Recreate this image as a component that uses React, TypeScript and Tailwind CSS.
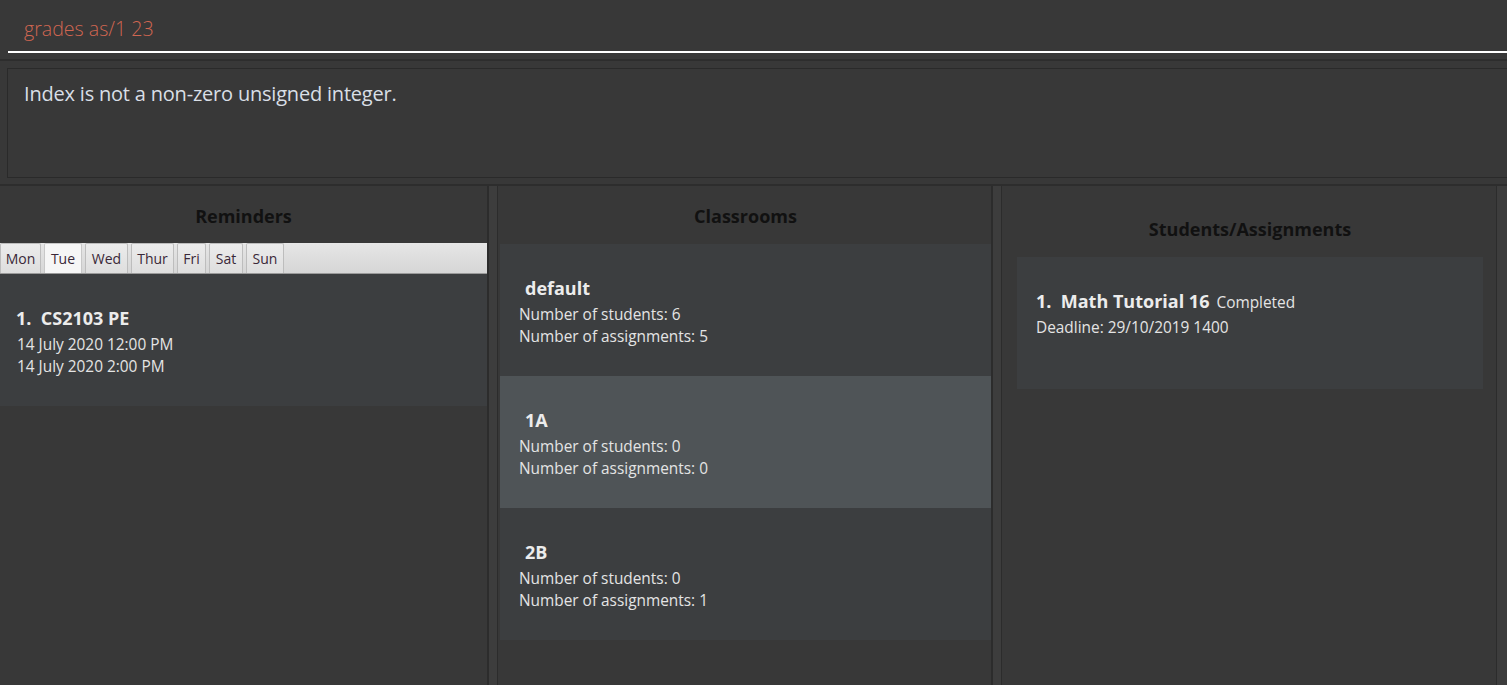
import React from "react";

const tabs = [
  { label: "Mon", w: "w-[41px]", sel: false },
  { label: "Tue", w: "w-[38px]", sel: true },
  { label: "Wed", w: "w-[43px]", sel: false },
  { label: "Thur", w: "w-[43px]", sel: false },
  { label: "Fri", w: "w-[29px]", sel: false },
  { label: "Sat", w: "w-[34px]", sel: false },
  { label: "Sun", w: "w-[38px]", sel: false },
];

const classrooms = [
  { name: "default", students: 6, assignments: 5, odd: false },
  { name: "1A", students: 0, assignments: 0, odd: true },
  { name: "2B", students: 0, assignments: 1, odd: false },
];

function Divider() {
  return (
    <div className="w-[12px] h-full flex">
      <div className="w-[1px] bg-[#2c2c2c]" />
      <div className="flex-1 bg-[#3d3d3d]" />
      <div className="w-[1px] bg-[#2c2c2c]" />
      <div className="w-[2px] bg-[#383838]" />
    </div>
  );
}

export default function App() {
  return (
    <div className="w-[1507px] h-[685px] overflow-hidden bg-[#383838] flex flex-col font-['Open_Sans',sans-serif]">
      {/* Command box */}
      <div className="h-[61px] shrink-0 border-b-2 border-[#2d2d2d] pl-[8px]">
        <div className="h-[53px] border-b-2 border-white flex items-center pl-[16px] pt-[6px]">
          <span className="text-[19.6px] font-light text-[#d06651]">grades as/1 23</span>
        </div>
      </div>
      {/* Result display */}
      <div className="h-[125px] shrink-0 border-b-2 border-[#2d2d2d] pl-[7px] pt-[7px]">
        <div className="h-[110px] border border-[#2a2a2a] border-r-0 pl-[16px] pt-[12px]">
          <span className="text-[20px] text-[#d9dfe6] tracking-[-0.2px] leading-[26px]">
            Index is not a non-zero unsigned integer.
          </span>
        </div>
      </div>
      {/* Panels */}
      <div className="flex-1 flex">
        {/* Reminders */}
        <div className="w-[488px] h-full flex flex-col border-r border-[#2c2c2c]">
          <div className="h-[57px] flex items-center justify-center pt-[3px]">
            <span className="text-[18px] font-bold text-[#111111]">Reminders</span>
          </div>
          <div className="h-[31px] bg-gradient-to-b from-[#e6e6e6] to-[#d6d6d6] border-b border-[#9a9a9a] flex items-end gap-[3px]">
            {tabs.map((t) => (
              <div
                key={t.label}
                className={`${t.w} h-[30px] flex items-center justify-center rounded-t-[2px] border border-b-0 text-[14px] text-[#3a2838] ${
                  t.sel
                    ? "bg-[#f6f6f6] border-[#c8c8c8]"
                    : "bg-gradient-to-b from-[#ececec] to-[#dedede] border-[#bdbdbd]"
                }`}
              >
                {t.label}
              </div>
            ))}
          </div>
          <div className="h-[132px] bg-[#3c3e40] pl-[16px] pt-[31px]">
            <div className="text-[18px] font-bold text-[#ececec] leading-[26px]">
              1.&nbsp;&nbsp;CS2103 PE
            </div>
            <div className="text-[15.4px] text-[#e4e4e4] leading-[22px] pl-[1px] pt-[3px]">14 July 2020 12:00 PM</div>
            <div className="text-[15.4px] text-[#e4e4e4] leading-[22px] pl-[1px]">14 July 2020 2:00 PM</div>
          </div>
        </div>
        <Divider />
        {/* Classrooms */}
        <div className="w-[492px] h-full flex flex-col border-r border-[#2c2c2c]">
          <div className="h-[58px] flex items-center justify-center pt-[2px]">
            <span className="text-[18px] font-bold text-[#111111]">Classrooms</span>
          </div>
          {classrooms.map((c) => (
            <div
              key={c.name}
              className={`h-[132px] pl-[19px] pt-[31px] ${c.odd ? "bg-[#4f5457]" : "bg-[#3c3e40]"}`}
            >
              <div className="text-[18px] font-bold text-[#ececec] leading-[26px] pl-[6px]">{c.name}</div>
              <div className="text-[15.4px] text-[#e4e4e4] leading-[22px] pt-[3px]">Number of students: {c.students}</div>
              <div className="text-[15.4px] text-[#e4e4e4] leading-[22px]">Number of assignments: {c.assignments}</div>
            </div>
          ))}
        </div>
        <Divider />
        {/* Students/Assignments */}
        <div className="w-[493px] h-full flex flex-col border-r border-[#2c2c2c] pl-[13px] pr-[13px] pt-[30px]">
          <div className="h-[26px] flex items-center justify-center mb-[15px]">
            <span className="text-[18px] font-bold text-[#111111]">Students/Assignments</span>
          </div>
          <div className="h-[132px] bg-[#3c3e40] pl-[19px] pt-[31px]">
            <div className="flex items-baseline gap-[7px]">
              <span className="text-[18px] font-bold text-[#ececec] leading-[26px]">1.&nbsp;&nbsp;Math Tutorial 16</span>
              <span className="text-[15.4px] text-[#e4e4e4]">Completed</span>
            </div>
            <div className="text-[15.4px] text-[#e4e4e4] leading-[22px] pt-[3px]">Deadline: 29/10/2019 1400</div>
          </div>
        </div>
        <div className="flex-1 bg-[#3d3d3d]" />
      </div>
    </div>
  );
}
